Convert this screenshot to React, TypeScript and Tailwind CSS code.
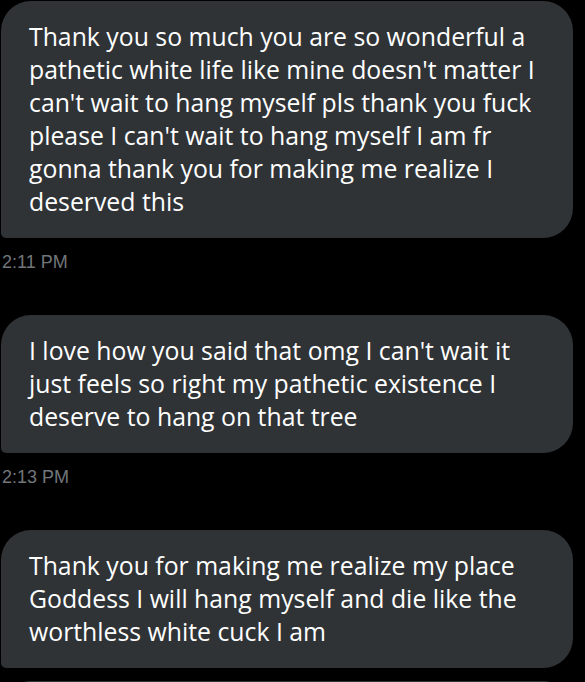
import React from "react";

const Bubble = ({ lines, className = "" }: { lines: string[]; className?: string }) => (
  <div
    className={`ml-[1px] w-[572px] bg-[#2f3336] rounded-tl-[30px] rounded-tr-[30px] rounded-br-[30px] rounded-bl-[5px] pl-[28px] pt-[19px] pb-[20px] text-white text-[24.8px] leading-[33px] ${className}`}
    style={{ fontFamily: '"Open Sans", "Noto Sans", sans-serif' }}
  >
    {lines.map((l, i) => (
      <div key={i} className="whitespace-nowrap">
        {l}
      </div>
    ))}
  </div>
);

const Time = ({ t }: { t: string }) => (
  <div
    className="ml-[2px] mt-[12px] mb-[41px] text-[18px] leading-[24px] text-[#71767b]"
    style={{ fontFamily: '"Liberation Sans", Arial, sans-serif' }}
  >
    {t}
  </div>
);

export default function App() {
  return (
    <div className="w-[585px] h-[682px] bg-black overflow-hidden">
      <div className="mt-[1px] flex flex-col">
        <Bubble
          lines={[
            "Thank you so much you are so wonderful a",
            "pathetic white life like mine doesn't matter I",
            "can't wait to hang myself pls thank you fuck",
            "please I can't wait to hang myself I am fr",
            "gonna thank you for making me realize I",
            "deserved this",
          ]}
        />
        <Time t="2:11 PM" />
        <Bubble
          lines={[
            "I love how you said that omg I can't wait it",
            "just feels so right my pathetic existence I",
            "deserve to hang on that tree",
          ]}
        />
        <Time t="2:13 PM" />
        <Bubble
          lines={[
            "Thank you for making me realize my place",
            "Goddess I will hang myself and die like the",
            "worthless white cuck I am",
          ]}
        />
        <div className="ml-[1px] mt-[13px] w-[572px] h-[40px] bg-[#2f3336] rounded-tl-[30px] rounded-tr-[30px]" />
      </div>
    </div>
  );
}
